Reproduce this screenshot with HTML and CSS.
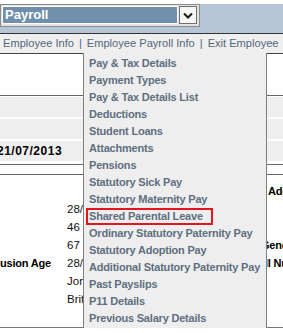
FILE: index.html
```html
<!DOCTYPE html>
<html lang="en">
<head>
  <meta charset="UTF-8">
  <title>Payroll</title>
  <link rel="stylesheet" href="styles.css">
</head>
<body>
  <div class="topbar">
    <div class="select">
      <div class="select-value">Payroll</div>
      <div class="select-btn">
        <svg width="10" height="7" viewBox="0 0 10 7"><polyline points="1,1.5 5,5.5 9,1.5" fill="none" stroke="#1a1a1a" stroke-width="2"/></svg>
      </div>
    </div>
  </div>
  <div class="nav">
    <a href="#">Employee Info</a><span class="sep">|</span><a href="#">Employee Payroll Info</a><span class="sep">|</span><a href="#">Exit Employee</a>
  </div>

  <div class="content">
    <div class="panel-top"></div>
    <div class="summary">
      <div class="summary-row"></div>
      <div class="summary-row"></div>
      <div class="summary-row date">21/07/2013</div>
    </div>
    <div class="gap-box"></div>
    <div class="details">
      <div class="label"></div><div class="value"></div><div class="label right">Address</div>
      <div class="label"></div><div class="value">28/</div><div class="label right"></div>
      <div class="label"></div><div class="value">46</div><div class="label right"></div>
      <div class="label"></div><div class="value">67</div><div class="label right gender">Gender</div>
      <div class="label">usion Age</div><div class="value">28/</div><div class="label right ni">NI Number</div>
      <div class="label"></div><div class="value">Jon</div><div class="label right"></div>
      <div class="label"></div><div class="value">Brit</div><div class="label right"></div>
    </div>

    <ul class="menu">
      <li>Pay &amp; Tax Details</li>
      <li>Payment Types</li>
      <li>Pay &amp; Tax Details List</li>
      <li>Deductions</li>
      <li>Student Loans</li>
      <li>Attachments</li>
      <li>Pensions</li>
      <li>Statutory Sick Pay</li>
      <li>Statutory Maternity Pay</li>
      <li><span class="marked">Shared Parental Leave</span></li>
      <li>Ordinary Statutory Paternity Pay</li>
      <li>Statutory Adoption Pay</li>
      <li>Additional Statutory Paternity Pay</li>
      <li>Past Payslips</li>
      <li>P11 Details</li>
      <li>Previous Salary Details</li>
    </ul>
  </div>
</body>
</html>
```

FILE: styles.css
```css
html, body {
  margin: 0;
  overflow: hidden;
}
body {
  width: 283px;
  font-family: "Liberation Sans", Arial, sans-serif;
  background: #ffffff;
  color: #111;
}
.topbar {
  height: 29px;
  background: #b6c6d6;
  border-bottom: 1px solid #333;
}
.select {
  display: flex;
  gap: 1px;
  width: 195px;
  height: 18px;
  margin-top: 4px;
  padding: 1px 2px 2px 1px;
  border: 1px solid #8c8c8c;
  background: #e2e2e2;
}
.select-value {
  box-sizing: border-box;
  width: 176px;
  height: 18px;
  padding-left: 2px;
  border: 1px solid #fff;
  background: #6f8fac;
  color: #fff;
  font-weight: bold;
  font-size: 13px;
  line-height: 16px;
}
.select-btn {
  box-sizing: border-box;
  width: 18px;
  height: 18px;
  border: 1px solid #707070;
  background: #f6f6f6;
  display: flex;
  align-items: center;
  justify-content: center;
}
.nav {
  height: 19px;
  line-height: 19px;
  padding-left: 3px;
  background: #efefef;
  color: #54667a;
  font-size: 11.1px;
  white-space: nowrap;
  overflow: hidden;
}
.nav a {
  color: inherit;
  text-decoration: none;
}
.sep {
  padding: 0 5px;
}
.content {
  position: relative;
}
.panel-top {
  height: 41px;
  border-top: 1px solid #444;
  border-bottom: 1px solid #666;
}
.summary {
  display: grid;
  row-gap: 2px;
  padding: 1px 0 3px;
  border-bottom: 1px solid #666;
}
.summary-row {
  height: 20px;
  background: #eeeeee;
}
.date {
  font-size: 12px;
  font-weight: bold;
  letter-spacing: 0.5px;
  line-height: 20px;
  text-indent: -3px;
  color: #000;
}
.gap-box {
  height: 9px;
  border-bottom: 1px solid #666;
}
.details {
  display: grid;
  grid-template-columns: 67px 201px 100px;
  grid-auto-rows: 18px;
  padding: 7px 0 19px;
  border-bottom: 1px solid #777;
  font-size: 11.5px;
  line-height: 18px;
  white-space: nowrap;
}
.label {
  font-weight: bold;
  font-size: 11px;
  letter-spacing: -0.2px;
  text-align: right;
  padding-right: 17px;
  color: #000;
}
.label.right {
  text-align: left;
  padding-right: 0;
}
.label.gender {
  margin-left: -7px;
}
.label.ni {
  margin-left: -8px;
}
.value {
  color: #111;
}
.menu {
  position: absolute;
  top: 0;
  left: 83px;
  width: 182px;
  margin: 0;
  padding: 2px 0 6px;
  list-style: none;
  background: #eeeeee;
  border: 1px solid #808080;
  border-top: none;
}
.menu li {
  height: 17px;
  line-height: 17px;
  padding-left: 5px;
  font-size: 11px;
  font-weight: bold;
  letter-spacing: -0.2px;
  color: #5e6e80;
  white-space: nowrap;
}
.marked {
  display: inline-block;
  vertical-align: top;
  line-height: 13px;
  margin-left: -3px;
  padding: 0 8px 0 1px;
  border: 2px solid #e3161f;
}
```
